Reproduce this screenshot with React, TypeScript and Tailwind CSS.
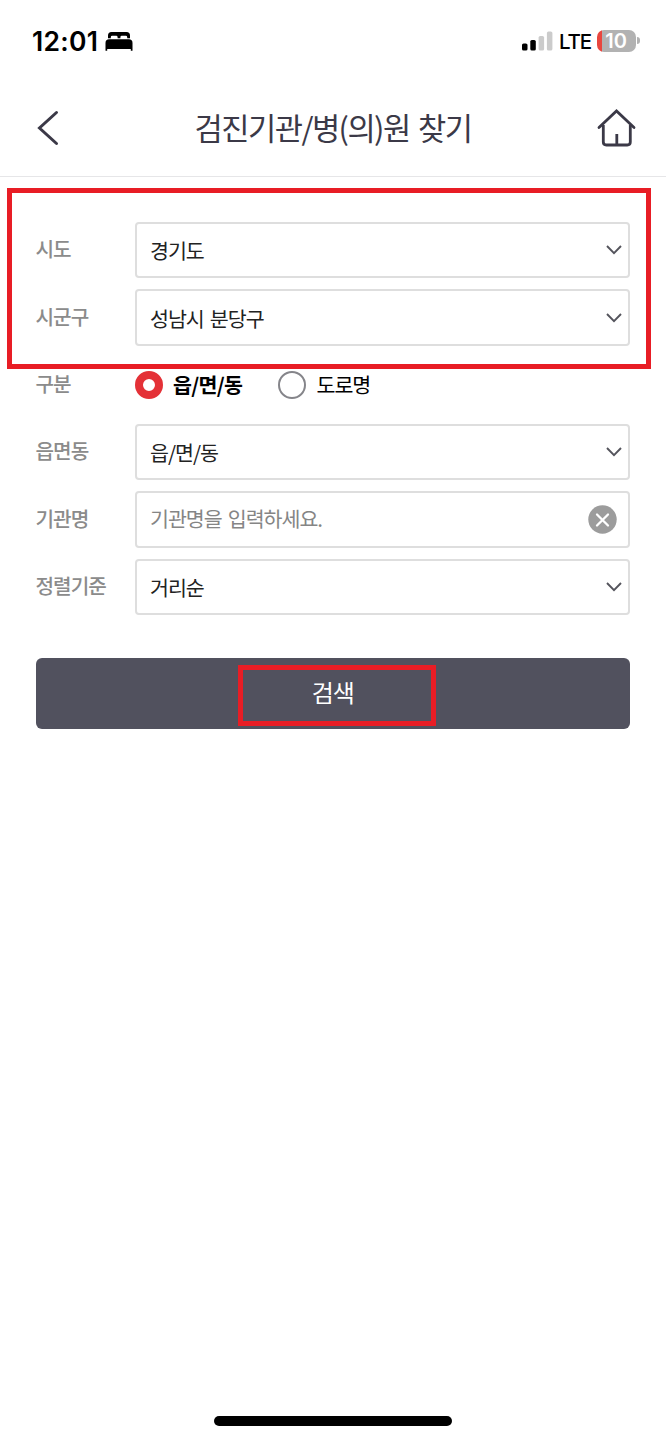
import type { ReactNode } from "react";

function StatusBar() {
  return (
    <div className="flex h-[80px] items-start justify-between pt-[27px] pr-[26px] pl-[32px] text-black">
      <div className="flex h-[27px] items-center">
        <span className="w-[73px] pt-[1px] font-['Inter',sans-serif] text-[26.500px] leading-[27px] font-semibold tracking-[0.300px]">
          12:01
        </span>
        <svg width="28" height="20" viewBox="0 0 28 20" fill="currentColor">
          <path d="M3 7.200V4.500Q3 1 6.500 1h15q3.500 0 3.500 3.500v2.700h-2.800V6.200q0-1.400-1.400-1.400h-4q-1.400 0-1.400 1.400v1h-2.800v-1q0-1.400-1.400-1.400H7.200q-1.400 0-1.400 1.400v1z" />
          <path d="M.5 19.700V12q0-3.700 3.700-3.700h19.600q3.700 0 3.700 3.700v7.700h-1.700V18H2.200v1.700z" />
        </svg>
      </div>
      <div className="flex h-[27px] items-center">
        <svg width="31" height="20" viewBox="0 0 31 20">
          <rect x="0" y="12.500" width="5.500" height="7" rx="1.600" fill="#000" />
          <rect x="8.300" y="9" width="5.500" height="10.500" rx="1.600" fill="#000" />
          <rect x="16.600" y="5" width="5.500" height="14.500" rx="1.600" fill="#cbcbcb" />
          <rect x="24.900" y="0.500" width="5.500" height="19" rx="1.600" fill="#cbcbcb" />
        </svg>
        <span className="ml-[6px] w-[38px] pt-[2px] font-['Inter',sans-serif] text-[20.500px] leading-[27px] font-medium tracking-[-1.200px]">
          LTE
        </span>
        <div className="flex h-[22px] w-[39px] items-center rounded-[7px] bg-[linear-gradient(to_right,#e8463f_4.500px,#b2b2b2_4.500px)]">
          <span className="w-[38px] text-center font-['Inter',sans-serif] text-[20px] leading-[26px] font-semibold text-white">
            10
          </span>
        </div>
        <div className="ml-px h-[7px] w-[3px] rounded-r-full bg-[#b2b2b2]" />
      </div>
    </div>
  );
}

function Header() {
  return (
    <header className="grid h-[97px] grid-cols-[1fr_auto_1fr] items-center border-b border-[#e6e6e8] pr-[30px] pl-[36px] text-[#3b3947]">
      <button type="button" aria-label="뒤로" className="w-[40px]">
        <svg width="24" height="36" viewBox="0 0 24 36" fill="none" stroke="currentColor" strokeWidth="3" strokeLinecap="round" strokeLinejoin="miter">
          <path d="M20.500 2.500 3.500 18 20.500 33.500" />
        </svg>
      </button>
      <h1 className="relative -left-[3px] pb-[2px] text-[30.700px] leading-[44px] tracking-[-0.05em] whitespace-nowrap [word-spacing:3px]">
        검진기관/병(의)원 찾기
      </h1>
      <button type="button" aria-label="홈" className="justify-self-end">
        <svg width="40" height="40" viewBox="0 0 40 40" fill="none" stroke="currentColor" strokeWidth="2.800" strokeLinecap="round" strokeLinejoin="miter">
          <path d="M3 19.500 20.500 3 38 19.500" />
          <path d="M7.300 17v17q0 3 3 3h21q3 0 3-3v-17M20.800 26v10" strokeLinecap="butt" />
        </svg>
      </button>
    </header>
  );
}

function Row({ label, children }: { label: string; children: ReactNode }) {
  return (
    <div className="flex h-[56.350px] items-center">
      <span className="w-[99.500px] shrink-0 pb-[2px] text-[20.200px] leading-[30px] font-medium tracking-[-0.05em] text-[#8b8b8b]">
        {label}
      </span>
      {children}
    </div>
  );
}

function Select({ value }: { value: string }) {
  return (
    <button
      type="button"
      className="flex h-full flex-1 items-center justify-between rounded-[4px] border-2 border-[#dedede] bg-white pr-[6px] pl-[13px] text-left text-[20.600px] leading-[30px] tracking-[-0.05em] text-[#222] [word-spacing:2.500px]"
    >
      <span>{value}</span>
      <svg width="16" height="10" viewBox="0 0 16 10" fill="none" stroke="#54545c" strokeWidth="1.900">
        <path d="M1 1l7 7.200L15 1" />
      </svg>
    </button>
  );
}

export default function App() {
  return (
    <div className="relative flex h-[1440px] w-[666px] flex-col bg-white font-['Noto_Sans_CJK_KR',sans-serif]">
      <StatusBar />
      <Header />
      <main className="flex flex-1 flex-col gap-[11px] pt-[45px] pr-[36px] pl-[35.500px]">
        <Row label="시도">
          <Select value="경기도" />
        </Row>
        <Row label="시군구">
          <Select value="성남시 분당구" />
        </Row>
        <Row label="구분">
          <div className="flex items-center text-[20.600px] leading-[30px] tracking-[-0.05em] text-black">
            <span className="size-[28px] rounded-full border-8 border-[#e43137]" />
            <span className="w-[115px] pb-[2px] pl-[10px] font-bold tracking-[-0.035em]">읍/면/동</span>
            <span className="size-[28px] rounded-full border-2 border-[#85858a]" />
            <span className="pb-[2px] pl-[10.500px]">도로명</span>
          </div>
        </Row>
        <Row label="읍면동">
          <Select value="읍/면/동" />
        </Row>
        <Row label="기관명">
          <div className="flex h-full flex-1 items-center justify-between rounded-[4px] border-2 border-[#dedede] bg-white pr-[11.500px] pl-[13px]">
            <span className="pb-[3px] text-[20.600px] leading-[30px] tracking-[-0.05em] text-[#858585] [word-spacing:2.500px]">
              기관명을 입력하세요.
            </span>
            <svg width="29" height="29" viewBox="0 0 29 29" fill="none">
              <circle cx="14.500" cy="14.500" r="14.200" fill="#9c9c9c" />
              <path d="M9 9.500l11 11M20 9.500l-11 11" stroke="#fff" strokeWidth="2.300" strokeLinecap="round" />
            </svg>
          </div>
        </Row>
        <Row label="정렬기준">
          <Select value="거리순" />
        </Row>
        <button
          type="button"
          className="mt-[32px] flex h-[71px] shrink-0 items-center justify-center rounded-[6px] bg-[#51515e] pb-[3px] text-[24px] leading-[36px] tracking-[-0.05em] text-white"
        >
          검색
        </button>
      </main>
      <div className="mb-[14px] ml-[214px] h-[10px] w-[238px] rounded-full bg-black" />

      <div className="pointer-events-none absolute top-[188px] left-[7px] h-[181px] w-[644px] border-5 border-[#e81d25]" />
      <div className="pointer-events-none absolute top-[665px] left-[238px] h-[61px] w-[198px] border-5 border-[#e81d25]" />
    </div>
  );
}
